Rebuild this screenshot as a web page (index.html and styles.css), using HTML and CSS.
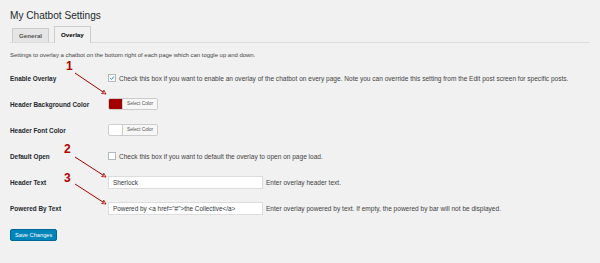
FILE: index.html
```html
<!DOCTYPE html>
<html lang="en">
<head>
  <meta charset="UTF-8" />
  <title>My Chatbot Settings</title>
  <link rel="stylesheet" href="styles.css">
</head>
<body>
  <div class="wrap">
    <h1>My Chatbot Settings</h1>

    <!-- Tabs -->
    <nav class="tabs">
      <a class="tab">General</a>
      <a class="tab active">Overlay</a>
    </nav>

    <p class="intro">Settings to overlay a chatbot on the bottom right of each page which can toggle up and down.</p>

    <!-- Settings table -->
    <div class="form-table">
      <div class="row">
        <div class="label">Enable Overlay</div>
        <div class="field">
          <span class="checkbox checked">
            <svg viewBox="0 0 10 10" width="8" height="8"><path d="M2 5.2 L4.2 7.4 L8.2 2.4" fill="none" stroke="#1e8cbe" stroke-width="1.6"/></svg>
          </span>
          <span class="desc">Check this box if you want to enable an overlay of the chatbot on every page. Note you can override this setting from the Edit post screen for specific posts.</span>
        </div>
      </div>
      <div class="row">
        <div class="label">Header Background Color</div>
        <div class="field">
          <span class="color-btn"><span class="swatch red"></span><span class="color-text">Select Color</span></span>
        </div>
      </div>
      <div class="row">
        <div class="label">Header Font Color</div>
        <div class="field">
          <span class="color-btn"><span class="swatch white"></span><span class="color-text">Select Color</span></span>
        </div>
      </div>
      <div class="row">
        <div class="label">Default Open</div>
        <div class="field">
          <span class="checkbox"></span>
          <span class="desc">Check this box if you want to default the overlay to open on page load.</span>
        </div>
      </div>
      <div class="row">
        <div class="label">Header Text</div>
        <div class="field">
          <span class="text-input">Sherlock</span>
          <span class="desc">Enter overlay header text.</span>
        </div>
      </div>
      <div class="row">
        <div class="label">Powered By Text</div>
        <div class="field">
          <span class="text-input">Powered by &lt;a href="#"&gt;the Collective&lt;/a&gt;</span>
          <span class="desc">Enter overlay powered by text. If empty, the powered by bar will not be displayed.</span>
        </div>
      </div>
    </div>

    <button class="save">Save Changes</button>
  </div>

  <!-- Annotation arrows -->
  <svg class="notes" width="600" height="263" viewBox="0 0 600 263">
    <defs>
      <marker id="head" viewBox="0 0 10 10" refX="9" refY="5" markerWidth="5" markerHeight="5" orient="auto">
        <path d="M1 1 L9 5 L1 9 L3 5 Z" fill="#f1f1f1" stroke="#b00000" stroke-width="1.4"/>
      </marker>
    </defs>
    <text x="66" y="70" class="num">1</text>
    <line x1="75" y1="73" x2="106" y2="94" stroke="#b00000" stroke-width="1" marker-end="url(#head)"/>
    <text x="64" y="153" class="num">2</text>
    <line x1="75" y1="157" x2="106" y2="177" stroke="#b00000" stroke-width="1" marker-end="url(#head)"/>
    <text x="64" y="182" class="num">3</text>
    <line x1="75" y1="184" x2="106" y2="204" stroke="#b00000" stroke-width="1" marker-end="url(#head)"/>
  </svg>
</body>
</html>
```

FILE: styles.css
```css
/* Base */
* {
  margin: 0;
  padding: 0;
  box-sizing: border-box;
}
html, body {
  width: 600px;
  height: 263px;
  overflow: hidden;
}
body {
  background: #f1f1f1;
  font-family: "Liberation Sans", Arial, sans-serif;
  color: #23282d;
  position: relative;
}
.wrap {
  padding: 9px 10px 0 10px;
}
h1 {
  font-size: 10.1px;
  font-weight: normal;
  line-height: 14px;
  color: #23282d;
}
/* Tabs */
.tabs {
  display: flex;
  align-items: flex-end;
  gap: 5px;
  margin-top: 4px;
  padding-left: 2px;
  height: 16px;
  border-bottom: 1px solid #dcdcdc;
}
.tab {
  font-size: 6.2px;
  font-weight: bold;
  line-height: 13px;
  padding: 0 6px;
  border: 1px solid #ccc;
  border-bottom: none;
  background: #e5e5e5;
  color: #555;
}
.tab.active {
  background: #f1f1f1;
  color: #000;
  line-height: 15px;
  margin-bottom: -1px;
  padding-bottom: 1px;
}
.intro {
  font-size: 5.95px;
  margin-top: 8px;
  line-height: 9px;
  color: #444;
}
/* Form table */
.form-table {
  margin-top: 5px;
}
.row {
  display: flex;
  align-items: center;
  height: 26px;
}
.label {
  width: 98px;
  font-size: 6.4px;
  font-weight: bold;
  color: #23282d;
}
.field {
  display: flex;
  align-items: center;
  gap: 3px;
  font-size: 6.55px;
  color: #444;
}
.checkbox {
  width: 8px;
  height: 8px;
  background: #fff;
  border: 1px solid #b4b9be;
  display: flex;
  align-items: center;
  justify-content: center;
}
.color-btn {
  display: flex;
  height: 12px;
  border: 1px solid #ccc;
  border-radius: 2px;
  background: #fff;
  overflow: hidden;
}
.swatch {
  width: 14px;
  border-right: 1px solid #ccc;
}
.swatch.red {
  background: #a50000;
}
.swatch.white {
  background: #fff;
}
.color-text {
  font-size: 4.8px;
  line-height: 10px;
  padding: 0 4px;
  color: #555;
  background: #f7f7f7;
}
.text-input {
  width: 155px;
  height: 13px;
  background: #fff;
  border: 1px solid #ddd;
  font-size: 6.4px;
  line-height: 11px;
  padding: 0 4px;
  color: #32373c;
}
.save {
  margin-top: 8px;
  background: #0085ba;
  border: 1px solid #006799;
  border-radius: 2px;
  color: #fff;
  font-family: "Liberation Sans", Arial, sans-serif;
  font-size: 5.7px;
  height: 12px;
  padding: 0 4px;
}
/* Annotation layer */
.notes {
  position: absolute;
  top: 0;
  left: 0;
}
.num {
  font-family: "Liberation Sans", Arial, sans-serif;
  font-weight: bold;
  font-size: 12px;
  fill: #b00000;
}
```
